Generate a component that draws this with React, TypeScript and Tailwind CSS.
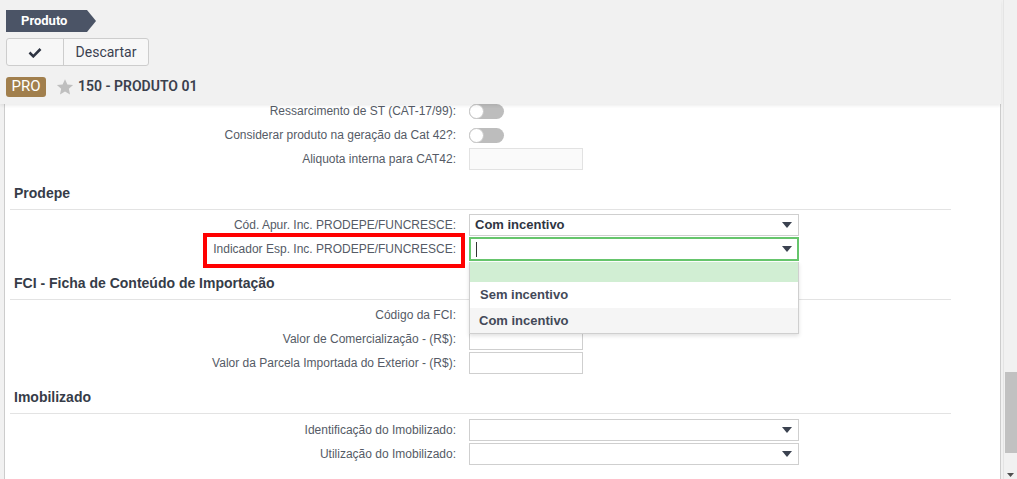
import React from "react";

const font = { fontFamily: "Roboto, 'Liberation Sans', Arial, sans-serif" };
const panelFont = { fontFamily: "'Liberation Sans', Arial, sans-serif" };

function Caret() {
  return (
    <svg width="10" height="6" viewBox="0 0 10 6" className="shrink-0">
      <path d="M0 0h10L5 6z" fill="#3b4250" />
    </svg>
  );
}

function Toggle() {
  return (
    <div className="relative h-[15px] w-[35px] rounded-full bg-[#bdbdbd]">
      <div className="absolute left-0 top-0 h-[15px] w-[15px] rounded-full border border-[#c8c8c8] bg-white" />
    </div>
  );
}

function Select({ value, focused }: { value?: string; focused?: boolean }) {
  return (
    <div
      className={
        focused
          ? "flex h-[24px] w-[330px] items-center justify-between border-2 border-[#66c56c] bg-white pl-[5px] pr-[5px]"
          : "flex h-[22px] w-[330px] items-center justify-between border border-[#cfcfcf] bg-white pl-[5px] pr-[6px]"
      }
    >
      {focused ? (
        <span className="h-[15px] w-px bg-[#333]" />
      ) : (
        <span className="text-[13px] font-bold text-[#2f3542]">{value}</span>
      )}
      <Caret />
    </div>
  );
}

function Input({ disabled }: { disabled?: boolean }) {
  return (
    <div
      className={
        disabled
          ? "h-[22px] w-[114px] border border-[#e2e2e2] bg-[#fafafa]"
          : "h-[22px] w-[114px] border border-[#cfcfcf] bg-white"
      }
    />
  );
}

function Row({
  label,
  children,
  extra,
}: {
  label: string;
  children?: React.ReactNode;
  extra?: React.ReactNode;
}) {
  return (
    <div className="relative flex h-[24px] items-center">
      <div className="w-[446px] text-right text-[12px] text-[#555b66]">{label}</div>
      <div className="ml-[13px] flex items-center">{children}</div>
      {extra}
    </div>
  );
}

function Heading({ title }: { title: string }) {
  return (
    <div className="mt-[6px] flex h-[33px] items-center border-b border-[#e3e3e3] pl-[4px] text-[14px] font-bold text-[#363c48]">
      {title}
    </div>
  );
}

export default function App() {
  return (
    <div className="flex h-[479px] w-[1017px] overflow-hidden bg-[#f1f1f1]" style={font}>
      <div className="flex w-[1001px] flex-col">
        {/* Header */}
        <header className="relative z-10 h-[104px] shrink-0 bg-[#f1f1f1] pl-[6px] pt-[10px] shadow-[0_2px_3px_rgba(0,0,0,0.07)]">
          <div className="flex h-[22px] w-[90px] items-center bg-[#4b5466] pl-[15px] text-[13px] font-bold text-white [clip-path:polygon(0_0,calc(100%-9px)_0,100%_50%,calc(100%-9px)_100%,0_100%)]">
            Produto
          </div>
          <div className="mt-[6px] flex h-[28px] w-[143px] rounded-[3px] border border-[#cdcdcd] bg-[#f7f7f7]">
            <div className="flex w-[57px] items-center justify-center border-r border-[#cdcdcd]">
              <svg width="14" height="11" viewBox="0 0 14 11">
                <path d="M1.5 5.5l3.8 3.8L12.5 2" fill="none" stroke="#2e3442" strokeWidth="2.6" />
              </svg>
            </div>
            <div className="flex flex-1 items-center justify-center text-[14px] text-[#3b4150]">
              Descartar
            </div>
          </div>
          <div className="mt-[10px] flex items-center">
            <div className="flex h-[20px] w-[40px] items-center justify-center rounded-[3px] bg-[#a17f4d] text-[15px] text-white">
              PRO
            </div>
            <svg width="18" height="18" viewBox="0 0 24 24" className="ml-[10px]">
              <path
                d="M12 1.5l3.2 7 7.6.8-5.7 5.1 1.6 7.5L12 18l-6.7 3.9 1.6-7.5L1.2 9.3l7.6-.8z"
                fill="#bfbfbf"
              />
            </svg>
            <span className="ml-[4px] text-[14px] font-semibold text-[#3a404d]">150 - PRODUTO 01</span>
          </div>
        </header>

        {/* Panel */}
        <div
          className="relative ml-[4px] flex-1 overflow-hidden border-x border-[#cccccc] bg-white"
          style={panelFont}
        >
          <div className="ml-[5px] mt-[-5px] w-[941px]">
            <Row label="Ressarcimento de ST (CAT-17/99):">
              <Toggle />
            </Row>
            <Row label="Considerar produto na geração da Cat 42?:">
              <Toggle />
            </Row>
            <Row label="Aliquota interna para CAT42:">
              <Input disabled />
            </Row>

            <Heading title="Prodepe" />
            <div className="pt-[3px]">
              <Row label="Cód. Apur. Inc. PRODEPE/FUNCRESCE:">
                <Select value="Com incentivo" />
              </Row>
              <Row
                label="Indicador Esp. Inc. PRODEPE/FUNCRESCE:"
                extra={
                  <>
                    <div className="pointer-events-none absolute left-[193px] top-[-4px] h-[35px] w-[262px] border-[4px] border-[#ff0000]" />
                    <div className="absolute left-[459px] top-[25px] z-20 w-[330px] border border-t-0 border-[#cfcfcf] bg-white shadow-[0_2px_4px_rgba(0,0,0,0.12)]">
                      <div className="h-[20px] bg-[#d1eed3]" />
                      <div className="flex h-[26px] items-center pl-[10px] text-[13px] font-bold text-[#434958]">
                        Sem incentivo
                      </div>
                      <div className="flex h-[25px] items-center bg-[#f5f5f5] pl-[9px] text-[13px] font-bold text-[#434958]">
                        Com incentivo
                      </div>
                    </div>
                  </>
                }
              >
                <Select focused />
              </Row>
            </div>

            <Heading title="FCI - Ficha de Conteúdo de Importação" />
            <div className="pt-[3px]">
              <Row label="Código da FCI:">
                <Input />
              </Row>
              <Row label="Valor de Comercialização - (R$):">
                <Input />
              </Row>
              <Row label="Valor da Parcela Importada do Exterior - (R$):">
                <Input />
              </Row>
            </div>

            <Heading title="Imobilizado" />
            <div className="pt-[4px]">
              <Row label="Identificação do Imobilizado:">
                <Select />
              </Row>
              <Row label="Utilização do Imobilizado:">
                <Select />
              </Row>
            </div>
          </div>
        </div>
      </div>

      {/* Scrollbar */}
      <div className="ml-[2px] flex w-[14px] flex-col border-l border-[#e4e4e4] bg-[#f1f1f1]">
        <div className="h-[372px]" />
        <div className="ml-[1px] h-[81px] bg-[#c1c1c1]" />
        <div className="flex flex-1 items-end justify-center pb-[2px]">
          <svg width="7" height="4" viewBox="0 0 7 4">
            <path d="M0 0h7L3.5 4z" fill="#505050" />
          </svg>
        </div>
      </div>
    </div>
  );
}
